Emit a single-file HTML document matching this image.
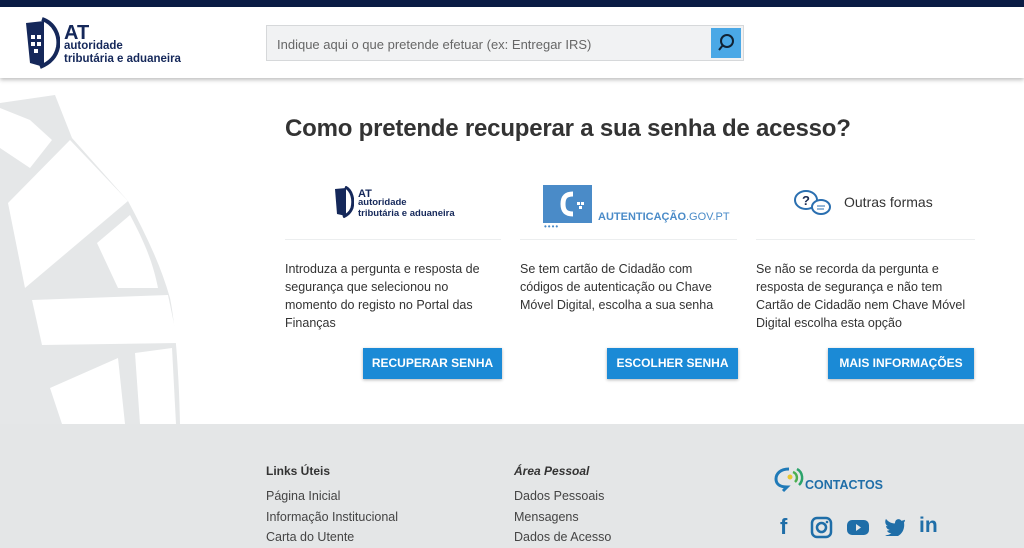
<!DOCTYPE html>
<html><head><meta charset="utf-8"><style>
*{margin:0;padding:0;box-sizing:border-box}
body{width:1024px;height:548px;overflow:hidden;font-family:"Liberation Sans",sans-serif;background:#fff;position:relative;color:#333}
.top{position:absolute;left:0;top:0;width:1024px;height:7px;background:#0b1c45}
.hdr{position:absolute;left:0;top:7px;width:1024px;height:71px;background:#fff;box-shadow:0 2px 4px rgba(0,0,0,.25);z-index:3}
.search{position:absolute;left:266px;top:18px;width:478px;height:36px;background:#f1f2f3;border:1px solid #d6d8da;font-size:13px;color:#666;padding:11px 10px}
.sbtn{position:absolute;right:2px;top:2px;width:30px;height:30px;background:#4aa8e6}
.main{position:absolute;left:0;top:78px;width:1024px;height:346px;overflow:hidden}
h1{position:absolute;left:285px;top:115px;font-size:24px;font-weight:bold;color:#333;letter-spacing:-.2px}
.col{position:absolute;top:260px;font-size:12.5px;line-height:18px;color:#333}
.sep{position:absolute;top:239px;height:1px;background:#eceeef}
.btn{position:absolute;top:348px;height:31px;background:#1b8ad6;color:#fff;font-weight:bold;font-size:12px;line-height:31px;text-align:center;box-shadow:0 1px 3px rgba(0,0,0,.3)}
.foot{position:absolute;left:0;top:424px;width:1024px;height:124px;background:#e4e6e7}
.fh{position:absolute;font-size:12px;font-weight:bold;color:#333}
.fl{position:absolute;font-size:12.5px;color:#444;line-height:20.5px}
</style></head><body>
<div class="top"></div>
<div class="hdr">
<svg style="position:absolute;left:24px;top:10px" width="36" height="52" viewBox="0 0 36 52"><path d="M2 6 L20 4 L20 50 L6 46 Z" fill="#15285a"/><path d="M18 2 C30 6 36 18 34 30 C32 40 26 46 16 50" stroke="#15285a" stroke-width="4" fill="none"/><rect x="7" y="18" width="4" height="4" fill="#fff"/><rect x="13" y="18" width="4" height="4" fill="#fff"/><rect x="7" y="25" width="4" height="4" fill="#fff"/><rect x="13" y="25" width="4" height="4" fill="#fff"/><rect x="10" y="32" width="4" height="4" fill="#fff"/></svg>
<div style="position:absolute;left:64px;top:15px;font-size:20px;font-weight:bold;color:#15285a">AT</div>
<div style="position:absolute;left:64px;top:33px;font-size:11.5px;line-height:13px;color:#15285a;font-weight:bold">autoridade<br>tributária e aduaneira</div>
<div class="search">Indique aqui o que pretende efetuar (ex: Entregar IRS)<div class="sbtn"><svg width="30" height="30"><circle cx="16" cy="13" r="6" stroke="#123" stroke-width="2" fill="none"/><path d="M12 17 L8 22" stroke="#123" stroke-width="2"/></svg></div></div>
</div>
<div class="main">
<svg style="position:absolute;left:0;top:0" width="280" height="346" viewBox="0 80 280 346"><path d="M0 105 L55 97 L72 140 L128 203 C145 235 160 265 170 300 C176 330 179 380 180 426 L0 426 Z" fill="#e5e7e8"/><path d="M0 110 L30 122 L52 142 L30 170 L0 150Z" fill="#fff"/><path d="M8 205 L70 142 L128 203 L25 290 Z" fill="#fff"/><path d="M97 245 L130 217 C142 240 152 260 158 290 L118 290 Z" fill="#fff"/><path d="M32 302 L168 297 L178 345 L42 347 Z" fill="#fff"/><path d="M50 390 L118 360 L125 426 L62 426 Z" fill="#fff"/><path d="M135 355 L172 350 L176 426 L140 426 Z" fill="#fff"/></svg>
</div>
<h1>Como pretende recuperar a sua senha de acesso?</h1>
<svg style="position:absolute;left:334px;top:186px" width="20" height="32" viewBox="0 0 20 32"><path d="M1 3 L12 2 L12 30 L3 28Z" fill="#15285a"/><path d="M11 1 C18 4 20 14 18 22 C16 27 13 29 9 31" stroke="#15285a" stroke-width="3" fill="none"/></svg>
<div style="position:absolute;left:358px;top:188px;font-size:11px;font-weight:bold;color:#15285a">AT</div>
<div style="position:absolute;left:358px;top:198px;font-size:9.5px;line-height:10.5px;color:#15285a;font-weight:bold">autoridade<br>tributária e aduaneira</div>
<div style="position:absolute;left:543px;top:185px;width:49px;height:38px;background:#4a8bc8"></div>
<svg style="position:absolute;left:543px;top:185px" width="49" height="38"><path d="M30 9 C22 9 20 13 20 19 C20 25 22 29 30 29" stroke="#fff" stroke-width="5" fill="none"/><rect x="34" y="17" width="3" height="3" fill="#fff"/><rect x="38" y="17" width="3" height="3" fill="#fff"/><rect x="36" y="21" width="3" height="3" fill="#fff"/></svg>
<div style="position:absolute;left:544px;top:222px;font-size:8px;color:#4a8bc8;letter-spacing:1px">••••</div>
<div style="position:absolute;left:598px;top:211px;font-size:11px;color:#4a8bc8"><b>AUTENTICAÇÃO</b>.GOV.PT</div>
<svg style="position:absolute;left:793px;top:189px" width="40" height="30"><ellipse cx="13" cy="11" rx="11" ry="9" fill="#fff" stroke="#2a6fb0" stroke-width="2"/><text x="9" y="16" font-size="13" font-weight="bold" fill="#1a2a50" font-family="Liberation Sans">?</text><ellipse cx="28" cy="18" rx="9" ry="7" fill="#fff" stroke="#2a6fb0" stroke-width="2"/><path d="M24 17 H32 M24 20 H31" stroke="#2a6fb0"/></svg>
<div style="position:absolute;left:844px;top:194px;font-size:14px;color:#333">Outras formas</div>
<div class="sep" style="left:285px;width:216px"></div>
<div class="sep" style="left:520px;width:217px"></div>
<div class="sep" style="left:756px;width:219px"></div>
<div class="col" style="left:285px;width:210px">Introduza a pergunta e resposta de segurança que selecionou no momento do registo no Portal das Finanças</div>
<div class="col" style="left:520px;width:215px">Se tem cartão de Cidadão com códigos de autenticação ou Chave Móvel Digital, escolha a sua senha</div>
<div class="col" style="left:756px;width:220px">Se não se recorda da pergunta e resposta de segurança e não tem Cartão de Cidadão nem Chave Móvel Digital escolha esta opção</div>
<div class="btn" style="left:363px;width:139px">RECUPERAR SENHA</div>
<div class="btn" style="left:607px;width:131px">ESCOLHER SENHA</div>
<div class="btn" style="left:828px;width:146px">MAIS INFORMAÇÕES</div>
<div class="foot"></div>
<div class="fh" style="left:266px;top:464px">Links Úteis</div>
<div class="fl" style="left:266px;top:486px">Página Inicial<br>Informação Institucional<br>Carta do Utente</div>
<div class="fh" style="left:514px;top:464px;font-style:italic">Área Pessoal</div>
<div class="fl" style="left:514px;top:486px">Dados Pessoais<br>Mensagens<br>Dados de Acesso</div>
<svg style="position:absolute;left:773px;top:465px" width="32" height="28"><path d="M16 4 C7 4 3 9 3 14 C3 19 7 22 14 22 L10 26" stroke="#1f7ab8" stroke-width="3" fill="none"/><path d="M20 7 A6 6 0 0 1 22 17" stroke="#4caf50" stroke-width="2.5" fill="none"/><path d="M24 4 A10 10 0 0 1 26 20" stroke="#2ba36b" stroke-width="2.5" fill="none"/><circle cx="17" cy="12" r="2.5" fill="#e8c630"/></svg>
<div style="position:absolute;left:805px;top:478px;font-size:12.5px;font-weight:bold;color:#1f6ea8">CONTACTOS</div>
<div style="position:absolute;left:780px;top:514px;font-size:22px;font-weight:bold;color:#1f6ea8">f</div>
<svg style="position:absolute;left:810px;top:516px" width="24" height="24"><rect x="2" y="2" width="19" height="19" rx="5" stroke="#1f6ea8" stroke-width="2.5" fill="none"/><circle cx="11.5" cy="11.5" r="4.5" stroke="#1f6ea8" stroke-width="2.5" fill="none"/><circle cx="17" cy="6" r="1.3" fill="#1f6ea8"/></svg>
<svg style="position:absolute;left:846px;top:518px" width="24" height="20"><rect x="1" y="2" width="22" height="15" rx="5" fill="#1f6ea8"/><path d="M10 6 L15 9.5 L10 13Z" fill="#e4e6e7"/></svg>
<svg style="position:absolute;left:884px;top:518px" width="22" height="18" viewBox="0 0 24 20"><path d="M23 2 C21 3 20 3 19 3 C17 0 12 1 12 6 C8 6 4 4 2 1 C0 5 2 8 4 9 C3 9 2 9 2 8 C2 11 4 13 6 13 C5 14 4 14 3 14 C4 16 6 17 8 17 C5 19 3 19 1 19 C13 26 24 17 22 5 C23 4 23 3 23 2Z" fill="#1f6ea8"/></svg>
<div style="position:absolute;left:919px;top:514px;font-size:21px;font-weight:bold;color:#1f6ea8">in</div>
</body></html>
